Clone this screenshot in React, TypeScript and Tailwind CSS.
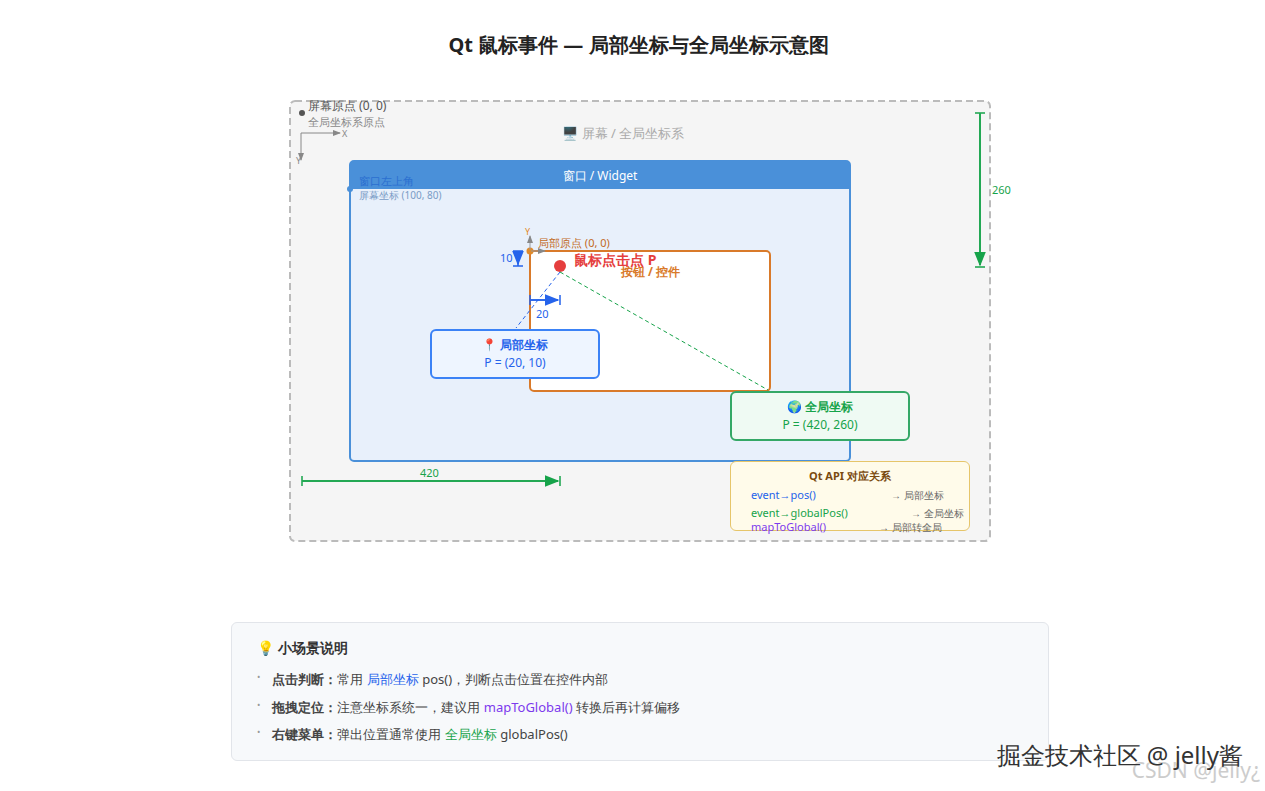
const font = "font-['Liberation_Sans','Noto_Sans_CJK_SC',sans-serif]";

function Diagram() {
  return (
    <div className="relative w-[1265px] h-[560px]">
      <svg className="absolute inset-0" width="1265" height="560">
        <defs>
          <marker id="ag" markerWidth="10" markerHeight="10" refX="9" refY="5" orient="auto"><path d="M0,1 L10,5 L0,9 z" fill="#16a34a" /></marker>
          <marker id="ab" markerWidth="10" markerHeight="10" refX="9" refY="5" orient="auto"><path d="M0,1 L10,5 L0,9 z" fill="#2563eb" /></marker>
          <marker id="ay" markerWidth="8" markerHeight="8" refX="7" refY="4" orient="auto"><path d="M0,1 L8,4 L0,7 z" fill="#888" /></marker>
        </defs>
        <rect x="290" y="101" width="700" height="440" rx="5" fill="#f5f5f5" stroke="#bbb" strokeWidth="2" strokeDasharray="7 4" />
        <circle cx="302" cy="113" r="3" fill="#555" />
        <path d="M301 133 H340" stroke="#888" markerEnd="url(#ay)" />
        <path d="M301 133 V160" stroke="#888" markerEnd="url(#ay)" />
        <rect x="350" y="161" width="500" height="300" rx="4" fill="#e8f0fb" stroke="#4a90d9" strokeWidth="2" />
        <path d="M350 165 a4 4 0 0 1 4 -4 H846 a4 4 0 0 1 4 4 V189 H350 z" fill="#4a90d9" />
        <circle cx="350" cy="189" r="3" fill="#4a90d9" />
        <rect x="530" y="251" width="240" height="140" rx="4" fill="#fff" stroke="#d97a2a" strokeWidth="2" />
        <circle cx="530" cy="251" r="3.5" fill="#e08a2a" />
        <path d="M530 250 V236" stroke="#999" markerEnd="url(#ay)" />
        <path d="M531 251 H545" stroke="#999" markerEnd="url(#ay)" />
        <circle cx="560" cy="266" r="6" fill="#e53e3e" />
        <path d="M560 272 L516 328" stroke="#2563eb" strokeDasharray="4 3" />
        <path d="M560 272 L768 390" stroke="#16a34a" strokeDasharray="4 3" />
        <path d="M518 251 V266 M513 251 H523 M513 266 H523" stroke="#2563eb" strokeWidth="1.5" />
        <path d="M518 254 V264" stroke="#2563eb" strokeWidth="1.5" markerEnd="url(#ab)" />
        <path d="M530 300 H558 M530 295 V305 M560 295 V305" stroke="#2563eb" strokeWidth="1.5" />
        <path d="M531 300 H558" stroke="#2563eb" strokeWidth="1.5" markerEnd="url(#ab)" />
        <path d="M302 481 H558 M302 476 V486 M560 476 V486" stroke="#16a34a" strokeWidth="1.5" />
        <path d="M303 481 H558" stroke="#16a34a" strokeWidth="1.5" markerEnd="url(#ag)" />
        <path d="M980 113 V265 M975 113 H985 M975 267 H985" stroke="#16a34a" strokeWidth="1.5" />
        <path d="M980 114 V265" stroke="#16a34a" strokeWidth="1.5" markerEnd="url(#ag)" />
      </svg>
      <div className="absolute left-[308px] top-[97px] text-[12px] text-[#555]">屏幕原点 (0, 0)</div>
      <div className="absolute left-[308px] top-[114px] text-[11px] text-[#888]">全局坐标系原点</div>
      <div className="absolute left-[342px] top-[127px] text-[9px] text-[#888]">X</div>
      <div className="absolute left-[296px] top-[154px] text-[9px] text-[#888]">Y</div>
      <div className="absolute left-[562px] top-[124px] text-[13px] text-[#aaa]">🖥 屏幕 / 全局坐标系</div>
      <div className="absolute left-[350px] top-[167px] w-[500px] text-center text-[12px] text-white">窗口 / Widget</div>
      <div className="absolute left-[359px] top-[173px] text-[11px] text-[#2b6fd0]">窗口左上角</div>
      <div className="absolute left-[359px] top-[188px] text-[10px] text-[#7a9cc6]">屏幕坐标 (100, 80)</div>
      <div className="absolute left-[525px] top-[225px] text-[9px] text-[#e08a2a]">Y</div>
      <div className="absolute left-[538px] top-[235px] text-[11px] text-[#c26a1e]">局部原点 (0, 0)</div>
      <div className="absolute left-[574px] top-[249px] text-[14px] font-bold text-[#e53e3e]">鼠标点击点 P</div>
      <div className="absolute left-[621px] top-[263px] text-[12px] font-bold text-[#d97a2a]">按钮 / 控件</div>
      <div className="absolute left-[500px] top-[250px] text-[11px] text-[#2563eb]">10</div>
      <div className="absolute left-[536px] top-[306px] text-[11px] text-[#2563eb]">20</div>
      <div className="absolute left-[430px] top-[329px] w-[170px] h-[50px] rounded-md border-2 border-[#3b82f6] bg-[#eef5ff] flex flex-col items-center justify-center text-[#2563eb]">
        <div className="text-[12px] font-bold">📍 局部坐标</div>
        <div className="text-[12px]">P = (20, 10)</div>
      </div>
      <div className="absolute left-[730px] top-[391px] w-[180px] h-[50px] rounded-md border-2 border-[#34a866] bg-[#effaf3] flex flex-col items-center justify-center text-[#16a34a]">
        <div className="text-[12px] font-bold">🌍 全局坐标</div>
        <div className="text-[12px]">P = (420, 260)</div>
      </div>
      <div className="absolute left-[730px] top-[461px] w-[240px] h-[70px] rounded-md border border-[#e6c56a] bg-[#fffbea] text-[11px]">
        <div className="text-center font-bold text-[#7a4a10] mt-[6px]">Qt API 对应关系</div>
        <div className="absolute left-[20px] top-[25px] text-[#2563eb]">event→pos()</div>
        <div className="absolute left-[160px] top-[26px] text-[10px] text-[#666]">→ 局部坐标</div>
        <div className="absolute left-[20px] top-[43px] text-[#16a34a]">event→globalPos()</div>
        <div className="absolute left-[180px] top-[44px] text-[10px] text-[#666]">→ 全局坐标</div>
        <div className="absolute left-[20px] top-[57px] text-[#7c3aed]">mapToGlobal()</div>
        <div className="absolute left-[148px] top-[58px] text-[10px] text-[#666]">→ 局部转全局</div>
      </div>
      <div className="absolute left-[420px] top-[465px] text-[11px] text-[#16a34a]">420</div>
      <div className="absolute left-[992px] top-[182px] text-[11px] text-[#16a34a]">260</div>
    </div>
  );
}

export default function App() {
  return (
    <div className={`relative w-[1265px] h-[791px] bg-white ${font}`}>
      <h1 className="pt-[30px] pl-[12px] text-center text-[20px] font-bold text-[#222] h-[70px]">Qt 鼠标事件 — 局部坐标与全局坐标示意图</h1>
      <div className="-mt-[70px]"><Diagram /></div>
      <div className="ml-[231px] w-[818px] mt-[62px] h-[139px] rounded-md border border-[#e2e5ea] bg-[#f7f9fb] px-[25px] pt-[14px]">
        <div className="text-[14px] font-bold text-[#333]">💡 小场景说明</div>
        <ul className="mt-[12px] space-y-[8px] text-[13px] text-[#444]">
          <li className="flex gap-[12px]"><span className="text-[#999] text-[9px]">•</span><span><b>点击判断：</b>常用 <span className="text-[#2563eb]">局部坐标</span> pos()，判断点击位置在控件内部</span></li>
          <li className="flex gap-[12px]"><span className="text-[#999] text-[9px]">•</span><span><b>拖拽定位：</b>注意坐标系统一，建议用 <span className="text-[#7c3aed]">mapToGlobal()</span> 转换后再计算偏移</span></li>
          <li className="flex gap-[12px]"><span className="text-[#999] text-[9px]">•</span><span><b>右键菜单：</b>弹出位置通常使用 <span className="text-[#16a34a]">全局坐标</span> globalPos()</span></li>
        </ul>
      </div>
      <div className="absolute right-[5px] top-[755px] text-[21px] text-[#ccc]">CSDN @jelly¿</div>
      <div className="absolute right-[22px] top-[737px] text-[24px] text-[#333] [text-shadow:0_0_3px_white]">掘金技术社区 @ jelly酱</div>
    </div>
  );
}
